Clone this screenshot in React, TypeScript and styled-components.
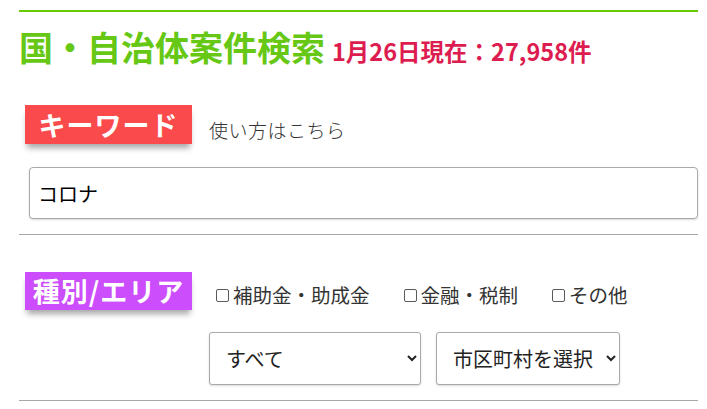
import React from "react";
import styled, { createGlobalStyle } from "styled-components";

const Global = createGlobalStyle`
  html, body { margin: 0; padding: 0; background: #fff; }
  body { font-family: "Noto Sans CJK JP", "Noto Sans", sans-serif; color: #333; }
`;

const Page = styled.div`
  padding: 10px 9px 0 19px;
`;

const Header = styled.header`
  border-top: 2px solid #66cc00;
  padding-top: 10px;
  line-height: 50px;
  height: 50px;
  white-space: nowrap;
`;

const Title = styled.h1`
  display: inline;
  margin: 0;
  font-size: 34px;
  font-weight: 700;
  color: #66c814;
`;

const Count = styled.span`
  margin-left: 7px;
  font-size: 23.5px;
  line-height: 1;
  font-weight: 700;
  color: #dd1c4f;
`;

const Section = styled.section<{ $top: number }>`
  padding-top: ${(p) => p.$top}px;
  padding-bottom: 15px;
  border-bottom: 1px solid #a8a8a8;
`;

const LabelRow = styled.div<{ $gap: number }>`
  display: flex;
  align-items: baseline;
  gap: ${(p) => p.$gap}px;
  padding-left: 6px;
`;

const Tag = styled.div<{ $bg: string; $h: number }>`
  flex: none;
  width: 167px;
  box-sizing: border-box;
  height: ${(p) => p.$h}px;
  line-height: ${(p) => p.$h}px;
  text-align: center;
  background: ${(p) => p.$bg};
  color: #fff;
  font-size: 27px;
  font-weight: 700;
  letter-spacing: 1px;
  box-shadow: 0 6px 6px -2px rgba(0, 0, 0, 0.35);
`;

const HelpLink = styled.a`
  position: relative;
  top: 2px;
  font-size: 19px;
  font-weight: 300;
  line-height: 1;
  color: #333;
  text-decoration: none;
  letter-spacing: 0.5px;
`;

const Input = styled.input`
  display: block;
  box-sizing: border-box;
  margin: 23px 0 0 10px;
  width: 669px;
  height: 52px;
  padding: 0 8px;
  border: 1px solid #a9a9a9;
  border-radius: 4px;
  box-shadow: 0 1px 2px rgba(0, 0, 0, 0.15);
  font-family: "Noto Sans CJK JP", sans-serif;
  font-size: 20px;
  color: #000;
  outline: none;
`;

const Checks = styled.div`
  display: flex;
  align-items: baseline;
  gap: 34px;
  line-height: 1;
`;

const Check = styled.label`
  display: inline-flex;
  align-items: center;
  font-size: 19.5px;
  line-height: 1;
  color: #333;
  white-space: nowrap;
`;

const Box = styled.input`
  appearance: none;
  flex: none;
  box-sizing: border-box;
  width: 13px;
  height: 13px;
  margin: 1px 4px 0 0;
  border: 1px solid #5a5a5a;
  border-radius: 2px;
  background: #fff;
`;

const Selects = styled.div`
  display: flex;
  gap: 15px;
  margin: 22px 0 0 190px;
`;

const Select = styled.select<{ $w: number }>`
  width: ${(p) => p.$w}px;
  height: 53px;
  box-sizing: border-box;
  padding: 0 6px 0 12px;
  border: 1px solid #a9a9a9;
  border-radius: 3px;
  background: #fff;
  box-shadow: 0 1px 2px rgba(0, 0, 0, 0.15);
  font-family: "Noto Sans CJK JP", sans-serif;
  font-size: 20px;
  color: #222;
`;

export default function App() {
  return (
    <>
      <Global />
      <Page>
        <Header>
          <Title>国・自治体案件検索</Title>
          <Count>1月26日現在：27,958件</Count>
        </Header>
        <Section $top={33}>
          <LabelRow $gap={17}>
            <Tag $bg="#fb4a4c" $h={39}>キーワード</Tag>
            <HelpLink href="#">使い方はこちら</HelpLink>
          </LabelRow>
          <Input defaultValue="コロナ" />
        </Section>
        <Section $top={37}>
          <LabelRow $gap={24}>
            <Tag $bg="#cc4dfc" $h={38}>種別/エリア</Tag>
            <Checks>
              <Check><Box type="checkbox" />補助金・助成金</Check>
              <Check><Box type="checkbox" />金融・税制</Check>
              <Check><Box type="checkbox" />その他</Check>
            </Checks>
          </LabelRow>
          <Selects>
            <Select $w={212} defaultValue="all">
              <option value="all">すべて</option>
            </Select>
            <Select $w={184} defaultValue="city">
              <option value="city">市区町村を選択</option>
            </Select>
          </Selects>
        </Section>
      </Page>
    </>
  );
}
